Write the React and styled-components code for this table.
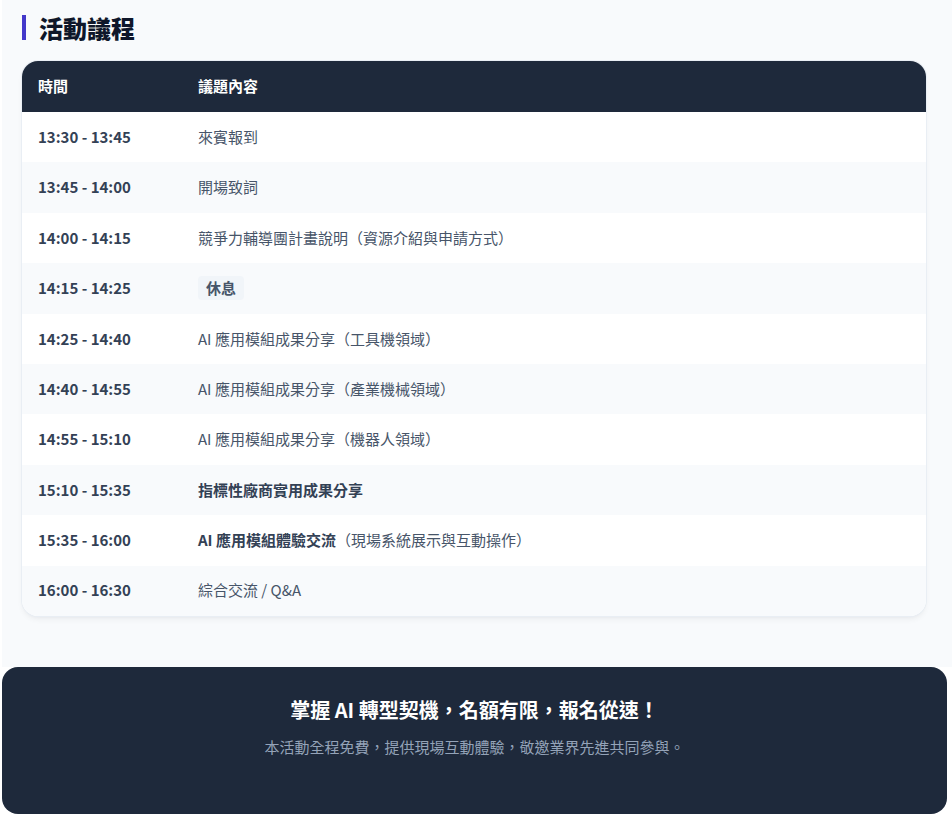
import React from "react";
import styled, { createGlobalStyle } from "styled-components";

const Global = createGlobalStyle`
  html, body { margin: 0; padding: 0; background: #ffffff; }
  body { font-family: "Noto Sans CJK TC", "Noto Sans", sans-serif; -webkit-font-smoothing: antialiased; }
  * { box-sizing: border-box; }
`;

const Page = styled.div`
  width: 952px;
`;

const Main = styled.section`
  margin-left: 2px;
  background: #f8fafc;
  padding: 12px 26px 51px 20px;
`;

const Title = styled.h2`
  margin: 0 0 18px;
  display: flex;
  align-items: center;
  gap: 13px;
  font-size: 24px;
  line-height: 31px;
  font-weight: 900;
  color: #0f172a;
  &::before {
    content: "";
    width: 4px;
    height: 25px;
    background: #4338ca;
  }
`;

const Card = styled.div`
  border-radius: 16px;
  overflow: hidden;
  box-shadow: 0 0 0 1px #e9eef4, 0 4px 6px -1px rgba(15, 23, 42, 0.06), 0 2px 4px -2px rgba(15, 23, 42, 0.05);
  background: #ffffff;
`;

const Table = styled.table`
  width: 100%;
  border-collapse: collapse;
  table-layout: fixed;
  font-size: 15px;
  line-height: 22.5px;
`;

const Th = styled.th`
  background: #1e293b;
  color: #ffffff;
  font-weight: 700;
  font-size: 15px;
  text-align: left;
  padding: 14px 16px;
  height: 51px;
  width: ${(p) => (p.$narrow ? "160px" : "auto")};
`;

const Tr = styled.tr`
  background: ${(p) => (p.$alt ? "#f8fafc" : "#ffffff")};
  & + & td { border-top: 1px solid #f1f5f9; }
`;

const Cell = styled.td`
  padding: 0 16px;
  height: 50.4px;
  font-size: 15px;
  vertical-align: middle;
  font-weight: ${(p) => (p.$time ? 700 : 400)};
  color: ${(p) => (p.$time ? "#334155" : "#475569")};
  white-space: nowrap;
`;

const Strong = styled.strong`
  font-weight: 700;
  color: #334155;
`;

const Badge = styled.span`
  display: inline-block;
  background: #f1f5f9;
  color: #475569;
  font-weight: 700;
  border-radius: 4px;
  padding: 1px 8px;
  line-height: 22px;
`;

const Cta = styled.footer`
  margin-left: 2px;
  width: 945px;
  background: #1e293b;
  border-radius: 16px;
  padding: 29px 20px 56px;
  text-align: center;
`;

const CtaTitle = styled.h3`
  margin: 0 0 12px;
  color: #ffffff;
  font-size: 20px;
  line-height: 28px;
  font-weight: 700;
`;

const CtaText = styled.p`
  margin: 0;
  color: #94a3b8;
  font-size: 15px;
  line-height: 22px;
`;

const rows = [
  ["13:30 - 13:45", "來賓報到"],
  ["13:45 - 14:00", "開場致詞"],
  ["14:00 - 14:15", "競爭力輔導團計畫說明（資源介紹與申請方式）"],
  ["14:15 - 14:25", <Badge>休息</Badge>],
  ["14:25 - 14:40", "AI 應用模組成果分享（工具機領域）"],
  ["14:40 - 14:55", "AI 應用模組成果分享（產業機械領域）"],
  ["14:55 - 15:10", "AI 應用模組成果分享（機器人領域）"],
  ["15:10 - 15:35", <Strong>指標性廠商實用成果分享</Strong>],
  ["15:35 - 16:00", <><Strong>AI 應用模組體驗交流</Strong>（現場系統展示與互動操作）</>],
  ["16:00 - 16:30", "綜合交流 / Q&A"],
];

export default function App() {
  return (
    <Page>
      <Global />
      <Main>
        <Title>活動議程</Title>
        <Card>
          <Table>
            <thead>
              <tr>
                <Th $narrow>時間</Th>
                <Th>議題內容</Th>
              </tr>
            </thead>
            <tbody>
              {rows.map(([t, c], i) => (
                <Tr key={t} $alt={i % 2 === 1}>
                  <Cell $time>{t}</Cell>
                  <Cell>{c}</Cell>
                </Tr>
              ))}
            </tbody>
          </Table>
        </Card>
      </Main>
      <Cta>
        <CtaTitle>掌握 AI 轉型契機，名額有限，報名從速！</CtaTitle>
        <CtaText>本活動全程免費，提供現場互動體驗，敬邀業界先進共同參與。</CtaText>
      </Cta>
    </Page>
  );
}
